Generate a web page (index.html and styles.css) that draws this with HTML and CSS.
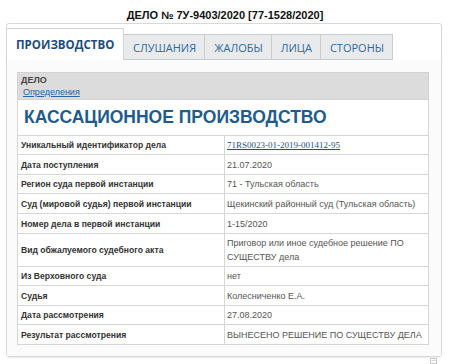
FILE: index.html
```html
<!DOCTYPE html>
<html lang="ru">
<head>
  <meta charset="UTF-8">
  <title>Дело № 7У-9403/2020</title>
  <link rel="stylesheet" href="styles.css">
</head>
<body>
  <h1 class="case-title">ДЕЛО № 7У-9403/2020 [77-1528/2020]</h1>

  <div class="panel">
    <!-- Вкладки -->
    <ul class="tabs">
      <li class="tab active">ПРОИЗВОДСТВО</li>
      <li class="tab">СЛУШАНИЯ</li>
      <li class="tab">ЖАЛОБЫ</li>
      <li class="tab">ЛИЦА</li>
      <li class="tab">СТОРОНЫ</li>
    </ul>

    <div class="tab-body">
      <table class="case-table">
        <tr class="head-row">
          <td colspan="2">
            <div class="head-label">ДЕЛО</div>
            <a href="#" class="head-link">Определения</a>
          </td>
        </tr>
        <tr class="kind-row">
          <td colspan="2">КАССАЦИОННОЕ ПРОИЗВОДСТВО</td>
        </tr>
        <tr>
          <td class="label">Уникальный идентификатор дела</td>
          <td class="value"><a href="#" class="uid">71RS0023-01-2019-001412-95</a></td>
        </tr>
        <tr class="even">
          <td class="label">Дата поступления</td>
          <td class="value">21.07.2020</td>
        </tr>
        <tr>
          <td class="label">Регион суда первой инстанции</td>
          <td class="value">71 - Тульская область</td>
        </tr>
        <tr class="even">
          <td class="label">Суд (мировой судья) первой инстанции</td>
          <td class="value">Щекинский районный суд (Тульская область)</td>
        </tr>
        <tr class="even">
          <td class="label">Номер дела в первой инстанции</td>
          <td class="value">1-15/2020</td>
        </tr>
        <tr class="tall">
          <td class="label">Вид обжалуемого судебного акта</td>
          <td class="value">Приговор или иное судебное решение ПО СУЩЕСТВУ дела</td>
        </tr>
        <tr>
          <td class="label">Из Верховного суда</td>
          <td class="value">нет</td>
        </tr>
        <tr class="even">
          <td class="label">Судья</td>
          <td class="value">Колесниченко Е.А.</td>
        </tr>
        <tr>
          <td class="label">Дата рассмотрения</td>
          <td class="value">27.08.2020</td>
        </tr>
        <tr class="even">
          <td class="label">Результат рассмотрения</td>
          <td class="value">ВЫНЕСЕНО РЕШЕНИЕ ПО СУЩЕСТВУ ДЕЛА</td>
        </tr>
      </table>
    </div>
  </div>

  <div class="footer-icon">
    <svg width="7" height="6" viewBox="0 0 7 6">
      <rect x="0.5" y="0.5" width="6" height="5" fill="none" stroke="#c8c8c8"/>
      <line x1="1.5" y1="2.5" x2="5.5" y2="2.5" stroke="#d4d4d4"/>
    </svg>
  </div>
</body>
</html>
```

FILE: styles.css
```css
body {
  margin: 0;
  padding: 0;
  background-color: #fff;
  font-family: "Liberation Sans", Arial, sans-serif;
  color: #333;
}

.case-title {
  margin: 0;
  padding-top: 9px;
  height: 14px;
  font-size: 11px;
  line-height: 12px;
  font-weight: bold;
  text-align: center;
  color: #111;
}

.panel {
  margin: 0 8px 0 6px;
  border: 1px solid #d8d8d8;
  border-radius: 3px;
  box-shadow: 0 1px 1px rgba(0, 0, 0, 0.08);
}

.tabs {
  display: flex;
  align-items: flex-end;
  list-style: none;
  margin: 0;
  padding: 4px 0 0;
  height: 36px;
  box-sizing: border-box;
}

.tab {
  font-family: "Open Sans", sans-serif;
  font-size: 11px;
  color: #2b6aa0;
  background-color: #e9eaec;
  border: 1px solid #c9cbce;
  border-left: none;
  height: 26px;
  line-height: 25px;
  padding: 0 8px 0 9px;
  box-sizing: border-box;
}

.tab.active {
  height: 32px;
  line-height: 32px;
  font-size: 11.5px;
  font-weight: bold;
  color: #1e4d7b;
  background-color: #fff;
  border: 1px solid #d4d4d4;
  border-bottom: none;
  border-radius: 2px 2px 0 0;
  margin-left: -1px;
  padding: 0 0 0 9px;
  width: 118px;
}

.tab-body {
  background-color: #fbfbfb;
  padding: 12px 12px 11px 10px;
}

.case-table {
  width: 100%;
  border-collapse: collapse;
  border: 1px solid #d2d2d2;
  background-color: #fff;
  font-size: 9px;
}

.case-table td {
  border: 1px solid #d6d6d6;
  padding: 0 3px;
  height: 18px;
  vertical-align: middle;
}

.case-table tr.even td {
  height: 19px;
}

.head-row td {
  background-color: #dcdcdc;
  height: 23px;
  padding: 2px 3px 1px;
  border-color: #d2d2d2;
}

.head-label {
  font-weight: bold;
  color: #444;
  line-height: 11px;
}

.head-link {
  display: inline-block;
  margin-left: 2px;
  color: #2b64a2;
  line-height: 12px;
}

.kind-row td {
  height: 35px;
  padding: 0 6px;
  font-size: 17.5px;
  font-weight: bold;
  color: #205b8c;
}

.label {
  width: 200px;
  font-size: 8.6px;
  font-weight: bold;
  color: #333;
}

.value {
  color: #555;
  line-height: 14px;
  padding-left: 2px !important;
}

.tall td {
  height: 32px;
}

.uid {
  font-family: "Liberation Serif", "Times New Roman", serif;
  color: #1f4f86;
}

.footer-icon {
  display: flex;
  justify-content: flex-end;
  padding: 1px 13px 0 0;
}
```
